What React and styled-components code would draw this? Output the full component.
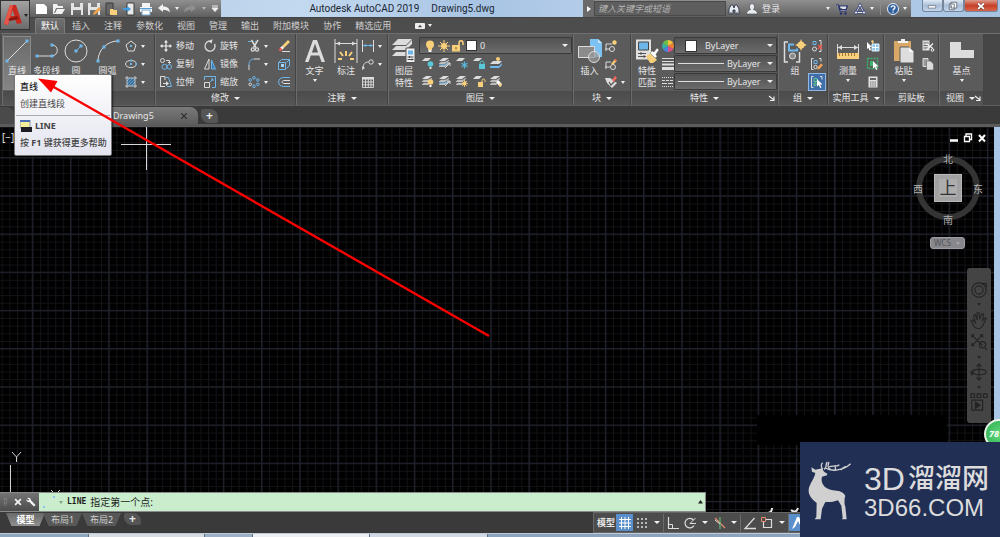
import React from "react";
import styled, { createGlobalStyle, css } from "styled-components";

const GlobalStyle = createGlobalStyle`
  * { box-sizing: border-box; }
  html, body { margin: 0; padding: 0; background: #000; }
  body {
    font-family: "Noto Sans", "Noto Sans CJK SC", sans-serif;
    font-size: 9px;
    line-height: 12px;
    color: #e6e6e6;
    overflow: hidden;
  }
  button, input, select { font: inherit; color: inherit; margin: 0; padding: 0; border: 0; background: none; }
  a { color: inherit; text-decoration: none; }
`;

/* ---------- icon drawings ---------- */
const W = "#dcdcdc";
const B = "#6fb7ea";
const Y = "#f8cf7a";
const s = (stroke, w = 1) => ({ fill: "none", stroke, strokeWidth: w });

const LayerStack = ({ y = 0 }) => (
  <g transform={`translate(0 ${y})`}>
    <path d="M4 0h6L6 3H0z" fill={W} />
    <path d="M0 5.200L2 3.800h4.600L10 1.800v1.200L6 6H0zM0 8.200L2 6.800h4.600L10 4.800V6L6 9H0z" fill="#bdbdbd" />
  </g>
);

const icons = {
  newFile: [12, <path d="M0 1h8l3 3v7H0z" fill="#fff" key="a" />],
  open: [12, <path d="M0 11V1h4l1 2h5v2H3L1 10h1l2-4h8l-3 5z" fill="#f1f1f1" key="a" />],
  save: [12, <path d="M0 0h12v12H0zM3 0v4h6V0zM2 7v5h8V7z" fill="#e4e4e4" fillRule="evenodd" key="a" />],
  saveAs: [12, <g key="a"><path d="M0 0h12v12H0zM3 0v4h6V0zM2 7v5h8V7z" fill="#e4e4e4" fillRule="evenodd" /><path d="M5 12l1-3 5-5 2 2-5 5z" fill="#e9a24a" /></g>],
  webOpen: [12, <g key="a"><path d="M1 0h7v12H1z" fill="#666" stroke="#3d3d3d" /><path d="M5 12V6h3l1 1h3v5z" fill={Y} /></g>],
  webSave: [12, <g key="a"><path d="M4 0h7v12H4z" fill="#e8e8e8" stroke="#3d3d3d" /><path d="M0 5h4V3l4 3-4 3V7H0z" fill="#3f9be0" /></g>],
  print: [12, <g key="a"><path d="M2 0h8v4H2zM0 4h12v5H0z" fill="#f4f4f4" /><path d="M2 7h8v5H2z" fill="#fff" stroke="#7aa9cf" /><path d="M0 5.500h12" stroke="#5b9fd4" /></g>],
  undo: [12, <path d="M0 5l5-4v2.500c4 0 6.500 1.500 7 6C10.500 7.500 8 6.700 5 6.700V9z" fill="#f2f2f2" key="a" />],
  redo: [12, <path d="M12 5L7 1v2.500c-4 0-6.500 1.500-7 6 1.500-2 4-2.800 7-2.800V9z" fill="#8f8f8f" key="a" />],
  more: [8, <path d="M1 1h6M1 3l3 3.500L7 3z" stroke="#f0f0f0" fill="#f0f0f0" key="a" />],
  find: [12, <g key="a"><path d="M1 11V6l2-4h2l1 3 1-3h2l2 4v5H7V7H5v4z" fill="#e6ebf2" stroke="#39414d" /><path d="M2 10h2M8 10h2" stroke="#39414d" /></g>],
  user: [12, <path d="M3.500 3.500a2.500 3 0 1 1 5 0c0 1.500-.7 2.500-1 3 2 .6 3.800 1.500 4 4.500H.5c.2-3 2-3.900 4-4.500-.3-.5-1-1.500-1-3z" fill="#e9ecf0" stroke="#4a4d54" strokeWidth=".7" key="a" />],
  cart: [12, <g key="a"><path d="M0 2h2.500l1.500 6h6.500M3 3h8.500L10 6.500H4z" fill="#e6e8f0" stroke="#26306e" strokeWidth="1.200" /><circle cx="5" cy="10.500" r="1.200" fill="#26306e" /><circle cx="9.500" cy="10.500" r="1.200" fill="#26306e" /></g>],
  share: [12, <g key="a"><path d="M6 2.500L10 9.500H2z" {...s("#26306e", 2.200)} /><path d="M6 2.500L10 9.500H2z" {...s("#e9ebf5", 1)} /><circle cx="6" cy="2.500" r="1.500" fill="#e9ebf5" stroke="#26306e" strokeWidth=".7" /><circle cx="2" cy="9.500" r="1.500" fill="#e9ebf5" stroke="#26306e" strokeWidth=".7" /><circle cx="10" cy="9.500" r="1.500" fill="#e9ebf5" stroke="#26306e" strokeWidth=".7" /></g>],
  help: [12, <g key="a"><circle cx="6" cy="6" r="5.500" fill="#2f5f9e" stroke="#e8eef7" /><path d="M4.200 4.600c0-2.400 3.800-2.400 3.800 0 0 1.300-2 1.300-2 2.800M6 8.400v1.400" {...s("#fff", 1.300)} /></g>],
  minimize: [12, <path d="M1.500 5.500h9v3h-9z" fill="#fff" stroke="#5a6472" strokeWidth=".8" key="a" />],
  restore: [12, <path d="M3.500 1.500h7v7h-7zM1.500 3.500h6v7h-6zM4 6v2" fill="#fff" stroke="#5a6472" key="a" />],
  close: [12, <path d="M2.500 3l7 6.500M9.500 3l-7 6.500" stroke="#5a3a3a" strokeWidth="3.400" key="a" />, <path d="M2.500 3l7 6.500M9.500 3l-7 6.500" stroke="#fff" strokeWidth="2.200" key="b" />],
  expand: [6, <path d="M1 0l4 3-4 3z" fill="#fff" key="a" />],
  launcher: [6, <path d="M0 1l5 4M5 1.500V5.500H1" {...s("#f0f0f0", 1.100)} key="a" />],
  ribbonBox: [12, <g key="a"><rect x="1" y="3" width="10" height="6" rx="1" fill="#ececec" /><path d="M4 7.200l2-2.400 2 2.400z" fill="#444" /></g>],

  line: [24, <g key="a"><path d="M2 22L22 2" {...s(W)} /><path d="M.5 20.500h3v3h-3zM20.500.5h3v3h-3z" fill={B} /></g>],
  pline: [24, <g key="a"><path d="M2 17h15c7-.5 7-11 0-11" {...s(W)} /><path d="M.5 15.500h3v3h-3zM15.500 15.500h3v3h-3zM15.500 4.500h3v3h-3z" fill={B} /></g>],
  circle: [24, <g key="a"><circle cx="12" cy="12" r="11" {...s(W)} /><path d="M12 12l5-5" {...s(B)} /><path d="M10.500 10.500h3v3h-3zM15.500 5.500h3v3h-3z" fill={B} /></g>],
  arc: [24, <g key="a"><path d="M2 22C2 11 11 2 22 2" {...s(W)} /><path d="M.5 20.500h3v3h-3zM6.500 6.500h3v3h-3zM20.500.5h3v3h-3z" fill={B} /></g>],
  polygon: [12, <g key="a"><path d="M6 1l5 4-2 6H3L1 5z" {...s(W)} /><path d="M5 5h2v2H5z" fill={B} /></g>],
  ellipse: [12, <g key="a"><ellipse cx="6" cy="6" rx="5.500" ry="3.500" {...s(W)} /><path d="M5 5h2v2H5zM5 1.500h2v2H5zM10.500 5h1.500v2h-1.500z" fill={B} /></g>],
  hatch: [12, <g key="a"><path d="M2 2h8v8H2z" fill="#3f6c93" /><path d="M2 5l3-3M2 8l6-6M3 10l7-7M6 10l4-4" stroke={B} strokeWidth=".7" /><path d="M2 0v12M10 0v12M0 2h12M0 10h12" {...s(W, .8)} /></g>],
  move: [12, <path d="M6 0l2 2.400H6.600v3h3V4L12 6 9.600 8V6.600h-3v3H8L6 12 4 9.600h1.400v-3h-3V8L0 6l2.400-2v1.400h3v-3H4z" fill="#f0f0f0" key="a" />],
  copy: [12, <g key="a"><circle cx="2.500" cy="2.500" r="2" {...s(W)} /><path d="M6 2.500h3.500V5M8 4l1.500 1.500L11 4" {...s(W)} /><circle cx="4.500" cy="8.800" r="2.500" {...s(B)} /><circle cx="9.300" cy="8.800" r="2.300" {...s(B)} /></g>],
  stretch: [12, <g key="a"><path d="M.5 11V.5H5V4M.5 10.500H5" {...s(W)} /><path d="M6 1.500h2.500L11.500 10.500H7" {...s(B)} /><path d="M3 7h3V5l3 2.500L6 10V8H3z" fill={W} /></g>],
  rotate: [12, <g key="a"><path d="M9.500 2.500A5 5 0 1 1 3.500 1.800" {...s(W, 1.300)} transform="rotate(20 6 6)" /><path d="M4.500 0h5l-2.500 3.500z" fill={W} transform="rotate(-20 7 2)" /></g>],
  mirror: [12, <g key="a"><path d="M5 1v10H.5z" {...s(W)} /><path d="M7.500 2v9h4z" fill="#3b7fb5" stroke={B} /></g>],
  scale: [12, <g key="a"><path d="M.5 4V.5h11v11H8" {...s(B)} /><path d="M.5 6.500h5v5h-5z" {...s(W)} /><path d="M6 6l3-3M9 5V3H7" {...s(B)} /></g>],
  trim: [12, <g key="a"><path d="M0 1.500h3M7 1.500h1" {...s(B)} /><path d="M3.500 0L8 7.500M10 0L5.500 7.500" {...s(W, 1.500)} /><circle cx="4.800" cy="9.500" r="1.600" {...s(W, 1.200)} /><circle cx="9" cy="9.500" r="1.600" {...s(W, 1.200)} /></g>],
  fillet: [12, <g key="a"><path d="M1 12V7M6 1h6" {...s(W)} /><path d="M1 7c0-4 2-6 5-6" {...s(B)} /></g>],
  arrayIcon: [12, <g {...s(B)} key="a"><circle cx="6" cy="1.800" r="1.300" /><circle cx="9.800" cy="3.900" r="1.300" /><circle cx="9.800" cy="8.300" r="1.300" /><circle cx="6" cy="10.300" r="1.300" /><circle cx="2.200" cy="8.300" r="1.300" stroke={W} /><circle cx="2.200" cy="3.900" r="1.300" /></g>],
  erase: [12, <g key="a"><path d="M4 6l6-6 2 2-6 6z" fill={Y} /><path d="M4 6l2 2-2 2-2-2z" fill="#fff" /><path d="M2.500 7.500l2 2-2 2L.5 10z" fill="#ef5a4e" /><path d="M4 11.500h8" stroke={W} /></g>],
  explode: [12, <g key="a"><path d="M.5 4.500h7v7h-7zM.5 4.500l3-3h8l-3 3M11.500 1.500v6l-3 3" {...s(B)} /><path d="M3 6h3v3H3z" fill="#a9d6f5" /></g>],
  offset: [12, <g key="a"><path d="M12 1.500H5.500c-6.500 0-6.500 9 0 9H12" {...s(B)} /><path d="M12 4.500H6c-2.500 0-2.500 3 0 3h6" {...s(W)} /></g>],
  text: [24, <path d="M2 23L10 1h4l8 22h-3.500l-2.300-6.500H7.800L5.500 23zM8.900 13.500h6.200L12 4.500z" fill={W} key="a" />],
  dim: [24, <g key="a"><path d="M1 0v24M23 0v24M1 4.500h22" {...s(W)} /><path d="M2 4.500l4-2v4zM22 4.500l-4-2v4z" fill={W} /><path d="M12 12v5M6 13l3 4M18 13l-3 4M4 20h4M20 20h-4" stroke={Y} strokeWidth="2" /></g>],
  linear: [12, <g key="a"><path d="M.5 0v12M11.500 0v12" {...s(W)} /><path d="M1 5.500h10" {...s(B)} /><path d="M1 5.500l3-1.500v3zM11 5.500L8 4v3z" fill={B} /></g>],
  leader: [12, <g key="a"><path d="M1 11C1 6 3 4 6.500 4" {...s(W)} /><circle cx="9" cy="4" r="2.200" {...s(W)} /><path d="M0 12l.5-4L3 10z" fill={W} /></g>],
  table: [12, <g key="a"><path d="M0 1h12v2.500H0z" fill={W} /><path d="M.5 1v10.500h11V1M0 6h12M0 8.800h12M3.500 3v8M6.300 3v8M9 3v8" {...s(W, .9)} /></g>],

  layerProps: [24, <g key="a"><path d="M6 0h14l-6 6H0zM0 11l4-4h10l6-6v4l-6 6zM0 17l4-4h9l1-1v5z" fill={W} /><path d="M14 9h9v14.500h-9z" fill="#f0f0f0" stroke="#555" /><path d="M16 11.500h5v4h-5z" fill={B} /><path d="M15.500 18h6M15.500 20.500h6M17.500 17v2M20 19.500v2" stroke="#444" /></g>],
  bulb: [12, <g key="a"><circle cx="6" cy="4.500" r="4" fill={Y} /><path d="M4 8h4v2H4z" fill={Y} /><path d="M4.500 10h3v2h-3z" fill="#f4f4f4" /></g>],
  sun: [12, <g key="a"><circle cx="6" cy="6" r="3" fill={Y} /><path d="M6 0v12M0 6h12M2 2l8 8M10 2l-8 8" stroke={Y} /></g>],
  lock: [12, <g key="a"><path d="M0 5h8v6.500H0z" fill={Y} /><path d="M7 6V3c0-3 4-3 4 0v2" {...s(Y, 1.500)} /><path d="M4 7v2.500" stroke="#7a5d1f" /></g>],
  layOff: [12, <g key="a"><path d="M3 1h6L6 4H0z" fill={W} /><circle cx="8.500" cy="7" r="2.800" fill="#58c7d8" /><path d="M7.500 10h2v2h-2z" fill={W} /></g>],
  layIso: [12, <g key="a"><LayerStack y={1} /><path d="M0 8h6l3-2" stroke={B} fill="none" /><path d="M6 11l5-5M8 6h3v3" {...s(W, 1)} /></g>],
  layFrz: [12, <g key="a"><path d="M3 1h6L6 4H0z" fill={W} /><path d="M8.500 4.500v7M5.500 6.200l6 3.600M11.500 6.200l-6 3.600" stroke="#58b9e0" strokeWidth="1.300" /></g>],
  layLock: [12, <g key="a"><path d="M3 1h6L6 4H0z" fill={W} /><path d="M6 7h6v5H6z" fill="#58c7d8" /><path d="M7.200 7V5.500c0-2 3.600-2 3.600 0V7" {...s("#58c7d8")} /></g>],
  layCur: [12, <g key="a"><circle cx="8" cy="2" r="2" fill={Y} /><path d="M3 4h9L9 7H0z" fill={W} /><path d="M0 9h9l3-3v2L9 11H0z" fill={B} /></g>],
  layOn: [12, <g key="a"><LayerStack y={1} /><circle cx="8.500" cy="7" r="2.800" fill={Y} /><path d="M7.500 10h2v2h-2z" fill="#fff" /></g>],
  layThaw: [12, <g key="a"><LayerStack y={1} /><circle cx="8.500" cy="8.500" r="2" fill={Y} /><path d="M8.500 5v7M5 8.500h7M6 6l5 5M11 6l-5 5" stroke={Y} strokeWidth=".8" /></g>],
  layUnlock: [12, <g key="a"><path d="M3 1h6L6 4H0z" fill={W} /><path d="M5 7h5v5H5z" fill={Y} /><path d="M9 7.500V5.500c0-2 3-2 3 0V7" {...s(Y)} /></g>],
  layMatch: [12, <g key="a"><LayerStack y={1} /><path d="M6 7l2-2 4 4-2 3z" fill="#fff" /><path d="M8.500 9.500L10 8l2 2-1.500 2z" fill={Y} /></g>],
  insert: [24, <g key="a"><path d="M12 0h8l4 4v14H12z" fill="#7cc2f2" /><path d="M20 0v4h4z" fill="#c7e4f8" /><path d="M.5 7.500h16v11H.5z" fill="#8b8b8b" stroke={W} /><circle cx="16" cy="18" r="5.500" fill="#9a9a9a" fillOpacity=".7" stroke={W} /></g>],
  blkNew: [12, <g key="a"><path d="M1 11V4h6M0 9h5" {...s(W)} /><circle cx="7" cy="9" r="2.500" {...s(W)} /><circle cx="9.500" cy="2.500" r="2.200" fill={Y} /></g>],
  blkEdit: [12, <g key="a"><path d="M1 11V4h5M0 9h5" {...s(W)} /><circle cx="8" cy="9" r="2.500" {...s(W)} /><path d="M6 6l4-5 2 1.500L8 7z" fill={Y} /><path d="M10 1l2 1.500-1 1L9 2z" fill="#ef5a4e" /></g>],
  blkAttr: [12, <g key="a"><path d="M0 2h5l7 5-5 5-5-5z" fill={W} /><path d="M4 6l2 3 5-5" {...s("#555", 1.200)} /><path d="M7 4l3-4 2 1.500L9 6z" fill="#ef6a5c" /></g>],
  matchProp: [24, <g key="a"><path d="M1 .5h15v20H1z" fill="#e0e0e0" /><path d="M3.500 3h10v8h-10z" fill={B} stroke="#444" /><path d="M3 14.500h8M3 17.500h8M6 13v3M9 16v3" stroke="#555" /><path d="M11 17l5-3 6 7-4 3h-3z" fill={Y} /><path d="M15 14l2-2 2 1 3-4 2 2-3 4 1 3-2 1z" fill="#fff" stroke="#666" strokeWidth=".5" /></g>],
  wheel: [12, <g key="a"><path d="M6 6V0a6 6 0 0 1 5.200 3z" fill="#f2c23e" /><path d="M6 6l5.200-3a6 6 0 0 1 0 6z" fill="#ee7f33" /><path d="M6 6l5.200 3A6 6 0 0 1 6 12z" fill="#da4f8c" /><path d="M6 6v6A6 6 0 0 1 .8 9z" fill="#4b84dd" /><path d="M6 6L.8 9a6 6 0 0 1 0-6z" fill="#36b3a1" /><path d="M6 6L.8 3A6 6 0 0 1 6 0z" fill="#71bd4a" /></g>],
  weight: [12, <path d="M0 .5h12M0 3.500h12" stroke={W} key="a" />, <path d="M0 6.500h12" stroke={W} strokeWidth="2" key="b" />, <path d="M0 10.500h12" stroke={W} strokeWidth="3" key="c" />],
  ltype: [12, <path d="M0 1.500h12M0 10.500h12" stroke={W} strokeDasharray="1 1" key="a" />, <path d="M0 4.500h12" stroke={W} strokeDasharray="3 1" key="b" />, <path d="M0 7.500h12" stroke={W} strokeDasharray="5 1" key="c" />],
  group: [24, <g key="a"><path d="M5 3H1.500v20H5M13 23h3.500V13" {...s(W, 1.500)} /><path d="M11 5.500H6v6h8v-2" {...s(B, 2)} /><circle cx="9.500" cy="17" r="3" fill="#8b8b8b" stroke={W} /><path d="M18 0l1.500 4L24 6l-4.500 2L18 12l-1.500-4L12 6l4.500-2z" fill={Y} /><circle cx="18" cy="6" r="3.500" fill={Y} /></g>],
  ungroup: [12, <g key="a"><path d="M8 .5h2v11H8" {...s(W)} /><path d="M2 1.500h3v3H2z" {...s(B)} /><circle cx="3.500" cy="9" r="2" {...s(W)} /><path d="M7 5l4 4M11 5L7 9" stroke="#ee5148" strokeWidth="1.400" /></g>],
  groupEdit: [12, <g key="a"><path d="M2.500.5h-2v11h2M8 .5h2v3" {...s(W)} /><path d="M3 2.500h3v3H3z" {...s(B)} /><circle cx="4.500" cy="9" r="1.700" {...s(W)} /><path d="M6.500 9.500l3.500-4 2 1.500-3.500 4-2 .5z" fill="#f2a25a" /></g>],
  groupSel: [12, <g key="a"><path d="M2.500.5h-2v11h2M9 .5h2v3" {...s(W)} /><path d="M3 2.500h3v3H3zM3 7h2v2.500H3z" {...s("#62c58a")} /><path d="M6 3l5.500 5.500H9l1.500 3-1.300.5-1.400-3L6 10.500z" fill="#fff" /></g>],
  measure: [24, <g key="a"><path d="M1.500 5v10M22.500 5v10M2 8.500h20" {...s(W)} /><path d="M2 8.500L6 6v5zM22 8.500L18 6v5z" fill={W} /><path d="M1 14h22v6H1z" fill={Y} /><path d="M3.500 14v3M6.500 14v3M9.500 14v3M12.500 14v3M15.500 14v3M18.500 14v3" stroke="#a07c38" /></g>],
  quickSel: [12, <g key="a"><path d="M5 4h7v7H5z" fill="#8dc9f3" stroke="#e9f4fc" /><path d="M8.500 4v7M5 7.500h7" stroke="#fff" /><path d="M0 2l5 5H3l1 3-1.500.5L1.500 8 0 9z" fill="#fff" /><path d="M4 1l1.500-1L7 1.500 5.500 4z" fill={Y} /></g>],
  selAll: [12, <g key="a"><path d="M.5.5h10v10H.5z" {...s("#3db56c", 1.400)} strokeDasharray="2 1" /><path d="M3 3h3v5H3z" fill="#3db56c" /><path d="M6 3l5.500 5.500H9l1.500 3-1.300.5-1.400-3L6 10.500z" fill="#fff" /></g>],
  calc: [12, <g key="a"><path d="M1.500.5h9v11h-9z" fill="#e2e2e2" /><path d="M3 2h6v2H3z" fill="#666" /><path d="M3 6h6M3 8h6M3 10h6" stroke="#666" strokeDasharray="1.500 .75" /></g>],
  paste: [24, <g key="a"><path d="M2 2h17v20H2z" fill="#d9a866" /><path d="M6 4V2h3V0h4v2h3v2z" fill="#f2f2f2" /><path d="M8 8h9l5 5v11H8z" fill="#dedede" stroke="#5b5b5b" /><path d="M17 8v5h5z" fill="#fafafa" /></g>],
  cut: [12, <g key="a"><path d="M.5.5h7v10h-7z" fill={W} /><path d="M1.500 3h5M1.500 5.500h5M1.500 8h5" stroke="#666" /><path d="M4 3.500l7 5M11 3.500l-6 6" stroke="#f0f0f0" strokeWidth="1.300" /><circle cx="10.500" cy="10" r="1.300" {...s("#f0f0f0")} /></g>],
  copyClip: [12, <g key="a"><path d="M1 .5h5v8H1z" fill="#9c9c9c" stroke={W} /><path d="M4.500 3h4l3 3v6h-7z" fill={W} stroke="#5b5b5b" strokeWidth=".6" /></g>],
  base: [24, <path d="M0 3h11v8h13v8H0z" fill={W} key="a" />],

  grip: [12, <path d="M3.500 0v12M6.500 0v12" stroke="#b5b5b5" strokeDasharray="1 1" key="a" />],
  cross: [12, <path d="M2.500 2.500l7 7M9.500 2.500l-7 7" stroke="#f4f4f4" strokeWidth="2" key="a" />],
  wrench: [12, <path d="M1 1.500C3 0 6 1 6 4l5.500 5.500-2 2L4 6C2 6.500.2 5 .5 3l2 1.500L4 3z" fill="#f4f4f4" key="a" />],
  cmdLine: [12, <g key="a"><path d="M1 11L11 1" stroke="#dbe9df" /><path d="M0 10h2v2H0zM10 0h2v2h-2z" fill="#8cc6ea" /></g>],
  gridIcon: [14, <path d="M3.500 1v12M7 1v12M10.500 1v12M1 3.500h12M1 7h12M1 10.500h12" stroke="#fff" key="a" />],
  snap: [12, <path d="M1 2h2M5 2h2M9 2h2M1 6h2M5 6h2M9 6h2M1 10h2M5 10h2M9 10h2" stroke={W} strokeWidth="1.500" key="a" />],
  ortho: [12, <g key="a"><path d="M1.500 0v11.500H12" {...s(W, 1.200)} /><path d="M1.500 7.500h4v4" {...s(W)} /></g>],
  polar: [12, <g key="a"><path d="M9.500 3A4.800 4.800 0 1 0 10 8.500" {...s(W, 1.200)} /><path d="M6 6.500h6M6 6.500L11.500 1" {...s(W)} /></g>],
  iso: [12, <g key="a"><path d="M1 1l10 10" {...s("#e58a6e", 1.200)} /><path d="M6 0v12" {...s("#5dbb72", 1.200)} /><path d="M1 3l5 4" {...s(W)} /></g>],
  track: [12, <path d="M12 11.500H1L10.500 1" {...s(W, 1.300)} key="a" />],
  osnap: [12, <g key="a"><path d="M2.500 2.500h8v8h-8z" {...s(W, 1.200)} /><path d="M.5.5h4v4h-4z" fill="#4c4c4c" stroke="#e58a6e" /></g>],
  anno: [14, <path d="M1 13L6 1h2l2 4 3 8-3-2-3-6-3 6z" fill="#fff" key="a" />],

  navWheel: [20, <g {...s("#242424", 1.300)} key="a"><circle cx="10" cy="10" r="8" /><circle cx="10" cy="10" r="4.500" /><path d="M13 3h5v4" /></g>],
  navPan: [20, <path d="M5 18L1 11l2-1 3 3-2-8 2-1 2 6V2h2l1 7 2-6 2 .5-1 7 3-3 1 1-4 8-3 3H8z" {...s("#242424", 1.200)} key="a" />],
  navZoom: [20, <g {...s("#242424", 1.300)} key="a"><path d="M2 2l12 12M14 2L2 14M2 5V2h3M11 2h3v3M2 11v3h3" /><circle cx="14" cy="13" r="3.500" /><path d="M16 16l3 3" /></g>],
  navOrbit: [20, <g {...s("#242424", 1.300)} key="a"><path d="M10 1v18M7 4l3-3 3 3M7 16l3 3 3-3" /><ellipse cx="10" cy="10" rx="8" ry="3" /><path d="M2 14l-1-4 4 1" /></g>],
  navMotion: [20, <g {...s("#242424", 1.300)} key="a"><path d="M1 1h4v4H1zM8 1h4v4H8zM15 1h4v4h-4zM2 8h12v11H2z" /><path d="M6 10l5 3.500L6 17z" fill="#242424" /></g>],
};

const Svg = styled.svg`
  display: block;
  flex: none;
  width: ${(p) => p.$size}px;
  height: ${(p) => p.$size}px;
  overflow: visible;
`;
function Icon({ name, size }) {
  const [box, ...content] = icons[name];
  return (
    <Svg $size={size || box} viewBox={`0 0 ${box} ${box}`} aria-hidden="true">
      {content}
    </Svg>
  );
}

const CaretSvg = styled.svg`
  display: block;
  flex: none;
  width: ${(p) => (p.$small ? 4 : 6)}px;
  height: 3px;
`;
const Caret = ({ small, color = "#f0f0f0" }) => (
  <CaretSvg $small={small} viewBox="0 0 6 3" preserveAspectRatio="none" aria-hidden="true">
    <path d="M0 0h6L3 3z" fill={color} />
  </CaretSvg>
);

/* ---------- shell ---------- */
const Shell = styled.div`
  position: relative;
  display: flex;
  flex-direction: column;
  width: 100%;
  height: 100vh;
  overflow: hidden;
  background: #3b3b3b;
`;

const aero = css`background: linear-gradient(100deg, #a9c4e2, #c3d9ef 30%, #a8c4e4 48%, #bfd6ee 70%, #a5c2e2);`;

const TitleBar = styled.header`
  display: flex;
  height: 18px;
  flex: none;
  border-bottom: 1px solid #444;
  ${aero}
`;
const AppMenu = styled.button`
  position: absolute;
  z-index: 2;
  left: 0;
  top: 0;
  display: flex;
  align-items: center;
  gap: 2px;
  width: 30px;
  height: 30px;
  padding-left: 3px;
  border: 1px solid #333;
  background: linear-gradient(#a2a2a2, #6c6c6c);
`;
const QuickAccess = styled.div`
  display: flex;
  align-items: center;
  width: 221px;
  padding: 0 2px 0 36px;
  justify-content: space-between;
  background: linear-gradient(#8f8f8f, #5f5f5f);
`;
const IconButton = styled.button`
  display: flex;
  align-items: center;
  justify-content: center;
  gap: 4px;
`;
const Caption = styled.h1`
  flex: 1;
  margin: 0;
  display: flex;
  justify-content: center;
  align-items: center;
  gap: 12px;
  font-family: Roboto, sans-serif;
  font-size: 10px;
  font-weight: 400;
  color: #1c2733;
`;
const InfoCenter = styled.div`
  display: flex;
  align-items: center;
  width: 328px;
  background: linear-gradient(#8f8f8f, #5f5f5f);
`;
const ExpandSearch = styled(IconButton)`
  width: 11px;
  height: 17px;
  background: #6a6a6a;
`;
const SearchInput = styled.input`
  width: 132px;
  height: 15px;
  padding: 0 3px;
  border: 1px solid #4a4a4a;
  background: #5e5e5e;
  font-style: italic;
  outline: none;
  &::placeholder { color: #b4b4b4; opacity: 1; }
`;
const InfoTools = styled.div`
  flex: 1;
  display: flex;
  align-items: center;
  padding: 0 4px 0 2px;
  gap: 6px;
`;
const Spacer = styled.span`flex: 1;`;
const Divider = styled.span`
  width: 1px;
  height: ${(p) => p.$h || 12}px;
  background: ${(p) => p.$color || "#8a8a8a"};
`;
const WindowButtons = styled.div`
  display: flex;
  width: 89px;
  padding: 0 2px 5px 11px;
`;
const WindowButton = styled.button`
  flex: ${(p) => (p.$danger ? "1.7" : "1")};
  display: flex;
  align-items: center;
  justify-content: center;
  border: 1px solid #75859a;
  border-top: 0;
  border-radius: 0 0 3px 3px;
  background: ${(p) => (p.$danger ? "linear-gradient(#dd9c8c, #c7402a 50%, #d8674b)" : "linear-gradient(#dfe9f5, #aabfd8 50%, #c3d5ea)")};
`;

/* ---------- ribbon ---------- */
const RibbonTabs = styled.nav`
  display: flex;
  flex: none;
  height: 15px;
  padding-left: 35px;
  background: #4d4d4d;
`;
const RibbonTab = styled.button`
  height: 15px;
  padding: 0 7px;
  line-height: 16px;
  color: ${(p) => (p.$active ? "#fff" : "#d0d0d0")};
  ${(p) => p.$active && css`
    padding: 0 5px;
    border: 1px solid #7c7c7c;
    border-bottom: 0;
    border-radius: 2px 2px 0 0;
    line-height: 14px;
    background: linear-gradient(#707070, #5d5d5d);
  `}
`;
const RibbonToggle = styled(IconButton)`
  margin-left: 16px;
  gap: 2px;
`;
const Ribbon = styled.div`
  display: flex;
  flex: none;
  height: 72px;
  border-top: 1px solid #6f6f6f;
  border-left: 2px solid #4a4a4a;
  background: linear-gradient(90deg, #3c3c3c, #464646);
`;
const Panel = styled.section`
  display: flex;
  flex-direction: column;
  flex: none;
  width: ${(p) => p.$w}px;
  border-right: 1px solid #444;
  border-left: 1px solid #6c6c6c;
`;
const PanelBody = styled.div`
  flex: 1;
  display: flex;
  padding: 2px ${(p) => p.$pr || 0}px 0 ${(p) => p.$pl || 0}px;
  background: #5b5b5b;
`;
const PanelFoot = styled.div`
  height: 14px;
  display: grid;
  grid-template-columns: 1fr auto 1fr;
  align-items: center;
  background: linear-gradient(#4b4b4b, #555);
`;
const PanelTitle = styled.h2`
  grid-column: 2;
  margin: 0;
  display: flex;
  align-items: center;
  gap: 5px;
  font-size: 9px;
  font-weight: 400;
  white-space: nowrap;
`;
const LauncherButton = styled(IconButton)`
  justify-self: end;
  padding-right: 2px;
`;
const BigButton = styled.button`
  display: flex;
  flex-direction: column;
  align-items: center;
  flex: none;
  width: ${(p) => p.$w || 30}px;
  height: 54px;
  padding-top: 2px;
  line-height: 12px;
  border: 1px solid transparent;
  ${(p) => p.$active && css`
    border-color: #8a8a8a;
    background: linear-gradient(#6a6a6a, #858585);
  `}
  & > svg:last-child:not(:first-child) { margin-top: 2px; }
`;
const Label = styled.span`
  white-space: nowrap;
  margin-top: ${(p) => (p.$first ? 2 : 0)}px;
`;
const Rows = styled.div`
  display: grid;
  grid-auto-flow: column;
  grid-template-rows: repeat(3, 18px);
  align-content: start;
  align-items: center;
  column-gap: ${(p) => p.$gap || 8}px;
  padding-top: 1px;
`;
const Tool = styled.button`
  display: flex;
  align-items: center;
  gap: 4px;
  white-space: nowrap;
  ${(p) => p.$active && css`
    margin-left: -3px;
    padding: 0 2px;
    width: 18px;
    height: 18px;
    border: 1px solid #8fb8e4;
    background: #3f6ea8;
  `}
`;
const Combo = styled.label`
  display: flex;
  align-items: center;
  gap: ${(p) => p.$gap || 0}px;
  height: 17px;
  padding: 0 3px 0 ${(p) => p.$pl || 4}px;
  border: 1px solid #3a3a3a;
  border-radius: 1px;
  background: linear-gradient(#525252, #6b6b6b);
`;
const ComboSelect = styled.select`
  flex: 1;
  min-width: 0;
  height: 15px;
  appearance: none;
  outline: none;
`;
const Swatch = styled.span`
  width: ${(p) => p.$size}px;
  height: ${(p) => p.$size}px;
  margin-right: ${(p) => p.$mr || 0}px;
  background: #fff;
  border: 1px solid #333;
`;
const LineSample = styled.span`
  width: 46px;
  height: 1px;
  margin-right: 3px;
  background: #ddd;
`;
const LayerArea = styled.div`
  flex: 1;
  display: flex;
  flex-direction: column;
  padding-top: 1px;
`;
const LayerTools = styled.div`
  display: grid;
  grid-template-columns: repeat(5, 12px);
  grid-template-rows: 18px 18px;
  column-gap: 5px;
  padding-left: 3px;
`;
const PropertyList = styled.div`
  flex: 1;
  display: flex;
  flex-direction: column;
  gap: 1px;
  padding-top: 1px;
`;

/* ---------- file tabs ---------- */
const FileTabs = styled.nav`
  display: flex;
  flex: none;
  align-items: flex-end;
  height: 22px;
  padding-top: 3px;
  border-top: 1px solid #5d5d5d;
  border-bottom: 3px solid #5b5b5b;
  background: #3a3a3a;
`;
const StartTab = styled.button`
  width: 14px;
  height: 17px;
  border-radius: 0 7px 0 0;
  background: #4a4a4a;
`;
const FileTab = styled.button`
  display: flex;
  align-items: center;
  justify-content: space-between;
  width: 184px;
  height: 17px;
  padding: 0 11px 0 99px;
  border-radius: 4px 8px 0 0;
  background: linear-gradient(#7a7a7a, #5d5d5d);
`;
const AddTab = styled.button`
  width: 17px;
  height: ${(p) => p.$h || 14}px;
  margin: 0 0 1px 3px;
  border-radius: 2px 8px 2px 8px;
  background: #555;
  font-size: 12px;
  font-weight: 700;
  line-height: 12px;
`;

/* ---------- canvas ---------- */
const Canvas = styled.main`
  position: relative;
  flex: 1;
  min-height: 0;
  overflow: hidden;
  background: #000;
  border-right: 6px solid #a9c6e6;
`;
const GridLayer = styled.svg`
  position: absolute;
  inset: 0;
  width: 100%;
  height: 100%;
`;
const ViewControl = styled.button`
  position: absolute;
  left: 2px;
  top: 4px;
  font-size: 10px;
`;
const DocButtons = styled.div`
  position: absolute;
  right: 7px;
  top: 6px;
  display: flex;
  gap: 4px;
`;
const ViewCube = styled.svg`
  position: absolute;
  right: 8px;
  top: 24px;
  width: 76px;
  height: 76px;
  font-family: "Noto Sans CJK SC", sans-serif;
`;
const WcsButton = styled.button`
  position: absolute;
  right: 29px;
  top: 110px;
  display: flex;
  align-items: center;
  gap: 5px;
  width: 35px;
  height: 12px;
  padding-left: 3px;
  border-radius: 3px;
  background: #87878c;
  border: 1px solid #9c9ca2;
  color: #55555a;
  font-size: 8px;
  line-height: 10px;
`;
const NavBar = styled.div`
  position: absolute;
  right: 3px;
  top: 141px;
  width: 24px;
  height: 155px;
  padding: 13px 0 12px;
  display: flex;
  flex-direction: column;
  align-items: center;
  justify-content: space-between;
  border-radius: 3px;
  background: #444;
`;
const CommandBar = styled.form`
  position: absolute;
  left: 0;
  bottom: 0;
  display: flex;
  width: 71%;
  height: 20px;
  border: 1px solid #8a8a8a;
  border-left: 0;
  background: #c9edcd;
  color: #1c1c1c;
`;
const CommandGrip = styled.div`
  display: flex;
  align-items: center;
  width: 39px;
  padding: 0 3px 0 2px;
  justify-content: space-between;
  background: linear-gradient(#747474, #4c4c4c);
`;
const CommandPrompt = styled.label`
  display: flex;
  align-items: center;
  gap: 4px;
  padding-left: 4px;
  font-size: 10px;
  white-space: nowrap;
`;
const CommandName = styled.b`
  font-family: "DejaVu Sans Mono", monospace;
  font-size: 8px;
`;
const CommandInput = styled.input`
  flex: 1;
  min-width: 0;
  outline: none;
`;

/* ---------- footer ---------- */
const Footer = styled.footer`
  display: flex;
  flex: none;
  height: 21px;
  background: #3a3a3a;
`;
const LayoutTabs = styled.nav`
  display: flex;
  flex: 1;
  padding: 1px 0 0 6px;
`;
const LayoutTab = styled.button`
  width: 39px;
  height: 13px;
  margin-right: ${(p) => (p.$active ? -2 : 0)}px;
  clip-path: polygon(0 0, 100% 0, 86% 100%, 14% 100%);
  background: ${(p) => (p.$active ? "linear-gradient(#6a6a6a, #8f8f8f)" : "#585858")};
  color: ${(p) => (p.$active ? "#fff" : "#cfcfcf")};
  font-weight: ${(p) => (p.$active ? 700 : 400)};
  line-height: 12px;
`;
const StatusBar = styled.div`
  display: flex;
  align-items: center;
  width: 407px;
  padding-left: 2px;
  border: 1px solid #666;
  background: #4c4c4c;
`;
const StatusButton = styled.button`
  display: flex;
  align-items: center;
  justify-content: center;
  width: ${(p) => p.$w || 17}px;
  height: 17px;
  font-weight: 700;
  background: ${(p) => (p.$on ? "#5a8fcb" : "transparent")};
`;
const TaskBar = styled.div`
  display: grid;
  grid-template-columns: 89px 116px 48px 117px 118px 1fr;
  flex: none;
  height: 4px;
  border-top: 1px solid #c0cad6;
  background: #8ba3bd;
`;
const TaskItem = styled.span`
  background: ${(p) => p.$c};
  border-right: 1px solid #5c7088;
`;

/* ---------- overlays ---------- */
const Tooltip = styled.aside`
  position: absolute;
  left: 14px;
  top: 74px;
  width: 98px;
  height: 82px;
  padding: 6px 5px 0;
  border: 1px solid #767676;
  border-radius: 2px;
  background: linear-gradient(#fff, #e3e4ef);
  box-shadow: 1px 1px 2px rgba(0, 0, 0, 0.6);
  color: #444;
  white-space: nowrap;
`;
const TipTitle = styled.h3`
  margin: 0 0 5px;
  font-size: 9px;
  font-weight: 500;
  color: #222;
`;
const TipText = styled.p`
  margin: 0;
  font-weight: ${(p) => (p.$strong ? 500 : 400)};
`;
const TipCommand = styled.p`
  display: flex;
  align-items: center;
  gap: 3px;
  margin: 5px -4px 5px;
  padding: 4px 4px 0;
  border-top: 1px solid #aaa;
  font-weight: 700;
`;
const Annotation = styled.svg`
  position: absolute;
  left: 0;
  top: 0;
  width: 500px;
  height: 350px;
  pointer-events: none;
`;
const Badge = styled.div`
  position: absolute;
  right: -14px;
  bottom: 88px;
  width: 30px;
  height: 30px;
  padding-left: 3px;
  border: 2px solid #e6f5e8;
  border-radius: 50%;
  background: radial-gradient(#5fd87b, #2fae50);
  color: #fff;
  font-weight: 700;
  font-style: italic;
  line-height: 26px;
`;
const Watermark = styled.div`
  position: absolute;
  right: 0;
  bottom: 0;
  width: 200px;
  height: 95px;
  display: flex;
  gap: 4px;
  padding: 14px 8px 0;
  background: #212f54;
  color: #dcdcdc;
`;
const Deer = styled.svg`
  flex: none;
  width: 52px;
  height: 68px;
`;
const Brand = styled.div`
  display: flex;
  flex-direction: column;
  padding-top: 6px;
  white-space: nowrap;
`;
const BrandName = styled.strong`
  display: flex;
  align-items: center;
  gap: 3px;
  font-family: "Liberation Sans", "Noto Sans CJK SC", sans-serif;
  font-size: 27px;
  font-weight: 500;
  line-height: 34px;
`;
const BrandLatin = styled.span`
  font-family: "Liberation Sans", sans-serif;
  font-size: 32px;
  font-weight: 400;
`;
const BrandUrl = styled.span`
  font-family: "Liberation Sans", sans-serif;
  font-size: 24px;
  line-height: 24px;
`;

/* ---------- composed pieces ---------- */
const tabNames = ["默认", "插入", "注释", "参数化", "视图", "管理", "输出", "附加模块", "协作", "精选应用"];

function Big({ icon, lines, caret, active, w }) {
  return (
    <BigButton $active={active} $w={w}>
      <Icon name={icon} />
      {lines.map((t, i) => <Label key={t} $first={i === 0}>{t}</Label>)}
      {caret && <Caret small />}
    </BigButton>
  );
}
function Small({ icon, label, caret, active, title }) {
  return (
    <Tool $active={active} aria-label={label || title}>
      <Icon name={icon} />
      {label}
      {caret && <Caret small />}
    </Tool>
  );
}
function PanelBox({ w, title, pl, pr, caret = true, launcher, children }) {
  return (
    <Panel $w={w}>
      <PanelBody $pl={pl} $pr={pr}>{children}</PanelBody>
      <PanelFoot>
        <PanelTitle>
          {title}
          {caret && <Caret />}
        </PanelTitle>
        {launcher && <LauncherButton aria-label={title + "设置"}><Icon name="launcher" /></LauncherButton>}
      </PanelFoot>
    </Panel>
  );
}

function Grid() {
  return (
    <GridLayer aria-hidden="true">
      <defs>
        <pattern id="minor" x="32.300" y="30.600" width="7.640" height="7.640" patternUnits="userSpaceOnUse">
          <path d="M.5 0v7.640M0 .5h7.640" stroke="#131318" strokeWidth="1" />
        </pattern>
        <pattern id="major" x="31.800" y="30.100" width="38.200" height="38.200" patternUnits="userSpaceOnUse">
          <path d="M.7 0v38.200M0 .7h38.200" stroke="#20232c" strokeWidth="1.200" />
        </pattern>
      </defs>
      <rect width="100%" height="100%" fill="url(#minor)" />
      <rect width="100%" height="100%" fill="url(#major)" />
      <rect x="757" y="288" width="190" height="30" fill="#000" />
      <path d="M146.500 0v43M121 17.500h50" stroke="#d8d8d8" />
      <path d="M10.500 338v28M12 325l4.500 5 4.500-5M16.500 330v5M51 363l3 3M60 363l-3 3" {...s("#d0d0d0")} />
      <path d="M767 386q5 0 5-5M791 383q5 4 7-2" {...s("#e8e8e8", 2)} />
    </GridLayer>
  );
}

export default function App() {
  return (
    <Shell>
      <GlobalStyle />
      <TitleBar>
        <AppMenu aria-label="应用程序菜单">
          <svg width="18" height="22" viewBox="0 0 18 22" aria-hidden="true">
            <path d="M0 20L6 1h6l6 18-5 1-2-5H6l-2 6z" fill="#c9281f" />
            <path d="M6 1h3L4 21l-4-1z" fill="#e8564a" />
            <path d="M8.500 6l2 6H7z" fill="#8a8a8a" />
            <path d="M4 15l9-3 2 3-9 2z" fill="#8d1610" />
          </svg>
          <Caret small color="#222" />
        </AppMenu>
        <QuickAccess>
          {["newFile", "open", "save", "saveAs", "webOpen", "webSave", "print", "undo"].map((n) => (
            <IconButton key={n} aria-label={n}><Icon name={n} /></IconButton>
          ))}
          <Caret small />
          <IconButton aria-label="redo"><Icon name="redo" /></IconButton>
          <Caret small color="#b5b5b5" />
          <IconButton aria-label="more"><Icon name="more" /></IconButton>
        </QuickAccess>
        <Caption><span>Autodesk AutoCAD 2019</span><span>Drawing5.dwg</span></Caption>
        <InfoCenter>
          <ExpandSearch aria-label="展开"><Icon name="expand" /></ExpandSearch>
          <SearchInput aria-label="搜索" placeholder="键入关键字或短语" />
          <InfoTools>
            <IconButton aria-label="查找"><Icon name="find" /></IconButton>
            <IconButton><Icon name="user" />登录</IconButton>
            <Spacer />
            <Caret small />
            <IconButton aria-label="购物车"><Icon name="cart" /></IconButton>
            <IconButton aria-label="共享"><Icon name="share" /><Caret small /></IconButton>
            <Divider />
            <IconButton aria-label="帮助"><Icon name="help" /><Caret small /></IconButton>
          </InfoTools>
        </InfoCenter>
        <WindowButtons>
          <WindowButton aria-label="最小化"><Icon name="minimize" size={10} /></WindowButton>
          <WindowButton aria-label="还原"><Icon name="restore" size={10} /></WindowButton>
          <WindowButton $danger aria-label="关闭"><Icon name="close" size={10} /></WindowButton>
        </WindowButtons>
      </TitleBar>

      <RibbonTabs>
        {tabNames.map((t, i) => <RibbonTab key={t} $active={i === 0}>{t}</RibbonTab>)}
        <RibbonToggle aria-label="功能区显示"><Icon name="ribbonBox" /><Caret small /></RibbonToggle>
      </RibbonTabs>

      <Ribbon>
        <PanelBox w={153} title="绘图">
          <Big icon="line" lines={["直线"]} active w={28} />
          <Big icon="pline" lines={["多段线"]} w={31} />
          <Big icon="circle" lines={["圆"]} w={28} />
          <Big icon="arc" lines={["圆弧"]} w={35} />
          <Rows>
            <Small icon="polygon" title="多边形" caret />
            <Small icon="ellipse" title="椭圆" caret />
            <Small icon="hatch" title="图案填充" caret />
          </Rows>
        </PanelBox>
        <PanelBox w={141} title="修改" pl={4}>
          <Rows $gap={10}>
            <Small icon="move" label="移动" />
            <Small icon="copy" label="复制" />
            <Small icon="stretch" label="拉伸" />
            <Small icon="rotate" label="旋转" />
            <Small icon="mirror" label="镜像" />
            <Small icon="scale" label="缩放" />
            <Small icon="trim" title="修剪" caret />
            <Small icon="fillet" title="圆角" caret />
            <Small icon="arrayIcon" title="阵列" caret />
            <Small icon="erase" title="删除" />
            <Small icon="explode" title="分解" />
            <Small icon="offset" title="偏移" />
          </Rows>
        </PanelBox>
        <PanelBox w={92} title="注释" pl={2}>
          <Big icon="text" lines={["文字"]} caret w={31} />
          <Big icon="dim" lines={["标注"]} w={32} />
          <Rows>
            <Small icon="linear" title="线性" caret />
            <Small icon="leader" title="引线" caret />
            <Small icon="table" title="表格" />
          </Rows>
        </PanelBox>
        <PanelBox w={185} title="图层">
          <Big icon="layerProps" lines={["图层", "特性"]} />
          <LayerArea>
            <Combo $gap={2}>
              <Icon name="bulb" />
              <Icon name="sun" />
              <Icon name="lock" />
              <Swatch $size={11} $mr={1} />
              <ComboSelect aria-label="图层"><option>0</option></ComboSelect>
              <Caret />
            </Combo>
            <LayerTools>
              {["layOff", "layIso", "layFrz", "layLock", "layCur", "layOn", "layIso", "layThaw", "layUnlock", "layMatch"].map((n, i) => (
                <Small key={i} icon={n} title={n} />
              ))}
            </LayerTools>
          </LayerArea>
        </PanelBox>
        <PanelBox w={58} title="块">
          <Big icon="insert" lines={["插入"]} w={31} />
          <Rows>
            <Small icon="blkNew" title="创建块" />
            <Small icon="blkEdit" title="编辑块" />
            <Small icon="blkAttr" title="编辑属性" caret />
          </Rows>
        </PanelBox>
        <PanelBox w={147} title="特性" launcher>
          <Big icon="matchProp" lines={["特性", "匹配"]} />
          <Rows>
            <Icon name="wheel" />
            <Icon name="weight" />
            <Icon name="ltype" />
          </Rows>
          <PropertyList>
            <Combo $pl={10}>
              <Swatch $size={12} $mr={8} />
              <ComboSelect aria-label="颜色"><option>ByLayer</option></ComboSelect>
              <Caret />
            </Combo>
            <Combo $pl={3}>
              <LineSample />
              <ComboSelect aria-label="线宽"><option>ByLayer</option></ComboSelect>
              <Caret />
            </Combo>
            <Combo $pl={3}>
              <LineSample />
              <ComboSelect aria-label="线型"><option>ByLayer</option></ComboSelect>
              <Caret />
            </Combo>
          </PropertyList>
        </PanelBox>
        <PanelBox w={50} title="组">
          <Big icon="group" lines={["组"]} w={32} />
          <Rows>
            <Small icon="ungroup" title="解除编组" />
            <Small icon="groupEdit" title="组编辑" />
            <Small icon="groupSel" title="组选择" active />
          </Rows>
        </PanelBox>
        <PanelBox w={56} title="实用工具">
          <Big icon="measure" lines={["测量"]} caret w={38} />
          <Rows>
            <Small icon="quickSel" title="快速选择" />
            <Small icon="selAll" title="全部选择" />
            <Small icon="calc" title="计算器" />
          </Rows>
        </PanelBox>
        <PanelBox w={55} title="剪贴板" caret={false}>
          <Big icon="paste" lines={["粘贴"]} caret w={37} />
          <Rows>
            <Small icon="cut" title="剪切" />
            <Small icon="copyClip" title="复制" />
          </Rows>
        </PanelBox>
        <PanelBox w={45} title="视图" launcher>
          <Big icon="base" lines={["基点"]} caret w={43} />
        </PanelBox>
      </Ribbon>

      <FileTabs>
        <StartTab aria-label="开始" />
        <FileTab>
          Drawing5
          <svg width="6" height="6" viewBox="0 0 6 6" aria-hidden="true"><path d="M0 0l6 6M6 0L0 6" {...s("#2f2f2f", 1.200)} /></svg>
        </FileTab>
        <AddTab aria-label="新图形">+</AddTab>
      </FileTabs>

      <Canvas>
        <Grid />
        <ViewControl>[−]</ViewControl>
        <DocButtons>
          <IconButton aria-label="最小化图形"><svg width="10" height="10" aria-hidden="true"><path d="M1 7.500h8" stroke="#fff" strokeWidth="2.500" /></svg></IconButton>
          <IconButton aria-label="还原图形"><svg width="10" height="10" aria-hidden="true"><path d="M3 3V1h5.500v5.500H7M1.500 3.500h5v5h-5z" {...s("#fff", 1.300)} /></svg></IconButton>
          <IconButton aria-label="关闭图形"><svg width="10" height="10" aria-hidden="true"><path d="M2 2l6 6.500M8 2L2 8.500" {...s("#fff", 2)} /></svg></IconButton>
        </DocButtons>
        <ViewCube viewBox="0 0 76 76" role="img" aria-label="ViewCube">
          <circle cx="38" cy="37" r="29" fill="none" stroke="#343434" strokeWidth="6" />
          <rect x="24.500" y="23.500" width="27" height="27" fill="#a2a2a2" stroke="#b8b8b8" />
          <rect x="29" y="28" width="18" height="18" fill="#adadad" />
          <text x="38" y="43" fontSize="17" fill="#333" textAnchor="middle">上</text>
          <text x="38" y="12" fontSize="10" fill="#b0b0b0" textAnchor="middle">北</text>
          <text x="38" y="73" fontSize="10" fill="#b0b0b0" textAnchor="middle">南</text>
          <text x="8" y="42" fontSize="10" fill="#b0b0b0" textAnchor="middle">西</text>
          <text x="68" y="42" fontSize="10" fill="#b0b0b0" textAnchor="middle">东</text>
        </ViewCube>
        <WcsButton>WCS<Caret small color="#a4a4aa" /></WcsButton>
        <NavBar>
          {["navWheel", "navPan", "navZoom", "navOrbit", "navMotion"].map((n, i) => (
            <React.Fragment key={n}>
              <IconButton aria-label={n}><Icon name={n} size={18} /></IconButton>
              {[0, 2, 3].includes(i) && <Caret small color="#262626" />}
            </React.Fragment>
          ))}
        </NavBar>
        <CommandBar onSubmit={(e) => e.preventDefault()}>
          <CommandGrip>
            <Icon name="grip" size={8} />
            <Icon name="cross" size={10} />
            <Icon name="wrench" size={10} />
          </CommandGrip>
          <CommandPrompt htmlFor="cmd">
            <Icon name="cmdLine" />
            <Caret small color="#8aa18d" />
            <CommandName>LINE</CommandName>
            指定第一个点:
          </CommandPrompt>
          <CommandInput id="cmd" />
          <IconButton type="button" aria-label="历史记录">
            <svg width="9" height="4" viewBox="0 0 9 4" aria-hidden="true"><path d="M2 3.500h5L4.500 0z" fill="#222" /></svg>
          </IconButton>
        </CommandBar>
      </Canvas>

      <Footer>
        <LayoutTabs>
          <LayoutTab $active>模型</LayoutTab>
          <LayoutTab>布局1</LayoutTab>
          <LayoutTab>布局2</LayoutTab>
          <AddTab $h={12} aria-label="新建布局">+</AddTab>
        </LayoutTabs>
        <StatusBar>
          <StatusButton $w={20}>模型</StatusButton>
          <StatusButton $on aria-label="栅格"><Icon name="gridIcon" /></StatusButton>
          <StatusButton $w={18} aria-label="捕捉"><Icon name="snap" /></StatusButton>
          <StatusButton $w={12} aria-label="捕捉选项"><Caret /></StatusButton>
          <Divider $h={18} $color="#6c6c6c" />
          <StatusButton aria-label="正交"><Icon name="ortho" /></StatusButton>
          <StatusButton $w={18} aria-label="极轴"><Icon name="polar" /></StatusButton>
          <StatusButton $w={12} aria-label="极轴选项"><Caret /></StatusButton>
          <StatusButton aria-label="等轴测"><Icon name="iso" /></StatusButton>
          <StatusButton $w={12} aria-label="等轴测选项"><Caret /></StatusButton>
          <Divider $h={18} $color="#6c6c6c" />
          <StatusButton aria-label="对象追踪"><Icon name="track" /></StatusButton>
          <StatusButton $w={18} aria-label="对象捕捉"><Icon name="osnap" /></StatusButton>
          <StatusButton $w={12} aria-label="对象捕捉选项"><Caret /></StatusButton>
          <Divider $h={18} $color="#6c6c6c" />
          <StatusButton $on aria-label="注释可见性"><Icon name="anno" /></StatusButton>
        </StatusBar>
      </Footer>
      <TaskBar>
        <TaskItem $c="#8fa6bf" />
        <TaskItem $c="#d7dce3" />
        <TaskItem $c="#9db0c6" />
        <TaskItem $c="#eceef2" />
        <TaskItem $c="#d2d9e2" />
      </TaskBar>

      <Tooltip role="tooltip">
        <TipTitle>直线</TipTitle>
        <TipText>创建直线段</TipText>
        <TipCommand>
          <svg width="12" height="12" viewBox="0 0 12 12" aria-hidden="true">
            <path d="M0 0h10v8H0z" fill="#f4ef9a" stroke="#8894b5" />
            <path d="M0 0h10v2H0z" fill="#4a6fb5" />
            <path d="M1 7h11v5H1z" fill="#1d1d24" />
          </svg>
          LINE
        </TipCommand>
        <TipText $strong>按 <b>F1</b> 键获得更多帮助</TipText>
      </Tooltip>

      <Annotation viewBox="0 0 500 350" aria-hidden="true">
        <path d="M489 336L52 86" stroke="#fb0000" strokeWidth="2.400" />
        <path d="M38 78.500l19.500 2.500-3 5.500-3.500 6z" fill="#fb0000" />
      </Annotation>

      <Badge>78</Badge>
      <Watermark>
        <Deer viewBox="12 0 156 204" aria-hidden="true">
          <path d="M22 34l12 7 20-4 6 10 10 6-1 5-15 4c-3 12 0 22 8 30 8 7 20 11 36 12 14 1 23 8 26 16l-2 6c0 10-2 16 2 26l4 38h-14l2-5-4-36-10-16c-14 5-26 6-38 5l-10 20-4 32H32l5-7 1-42c-12-10-22-20-24-34-2-20 16-34 20-56l-10-4z" fill="#d0d0d0" />
          <path d="M56 40c-5-8-7-14 0-20M60 40c12-8 2-12 10-22M64 36c20 12 52 8 76-13M82 42c-14-8-10-14-7-24M76 32c10-4 22 2 30-6M96 44c-6-6 2-10-4-16M110 42c8-6 8-10 16-10" {...s("#d0d0d0", 4)} />
        </Deer>
        <Brand>
          <BrandName><BrandLatin>3D</BrandLatin>溜溜网</BrandName>
          <BrandUrl>3D66.COM</BrandUrl>
        </Brand>
      </Watermark>
    </Shell>
  );
}
